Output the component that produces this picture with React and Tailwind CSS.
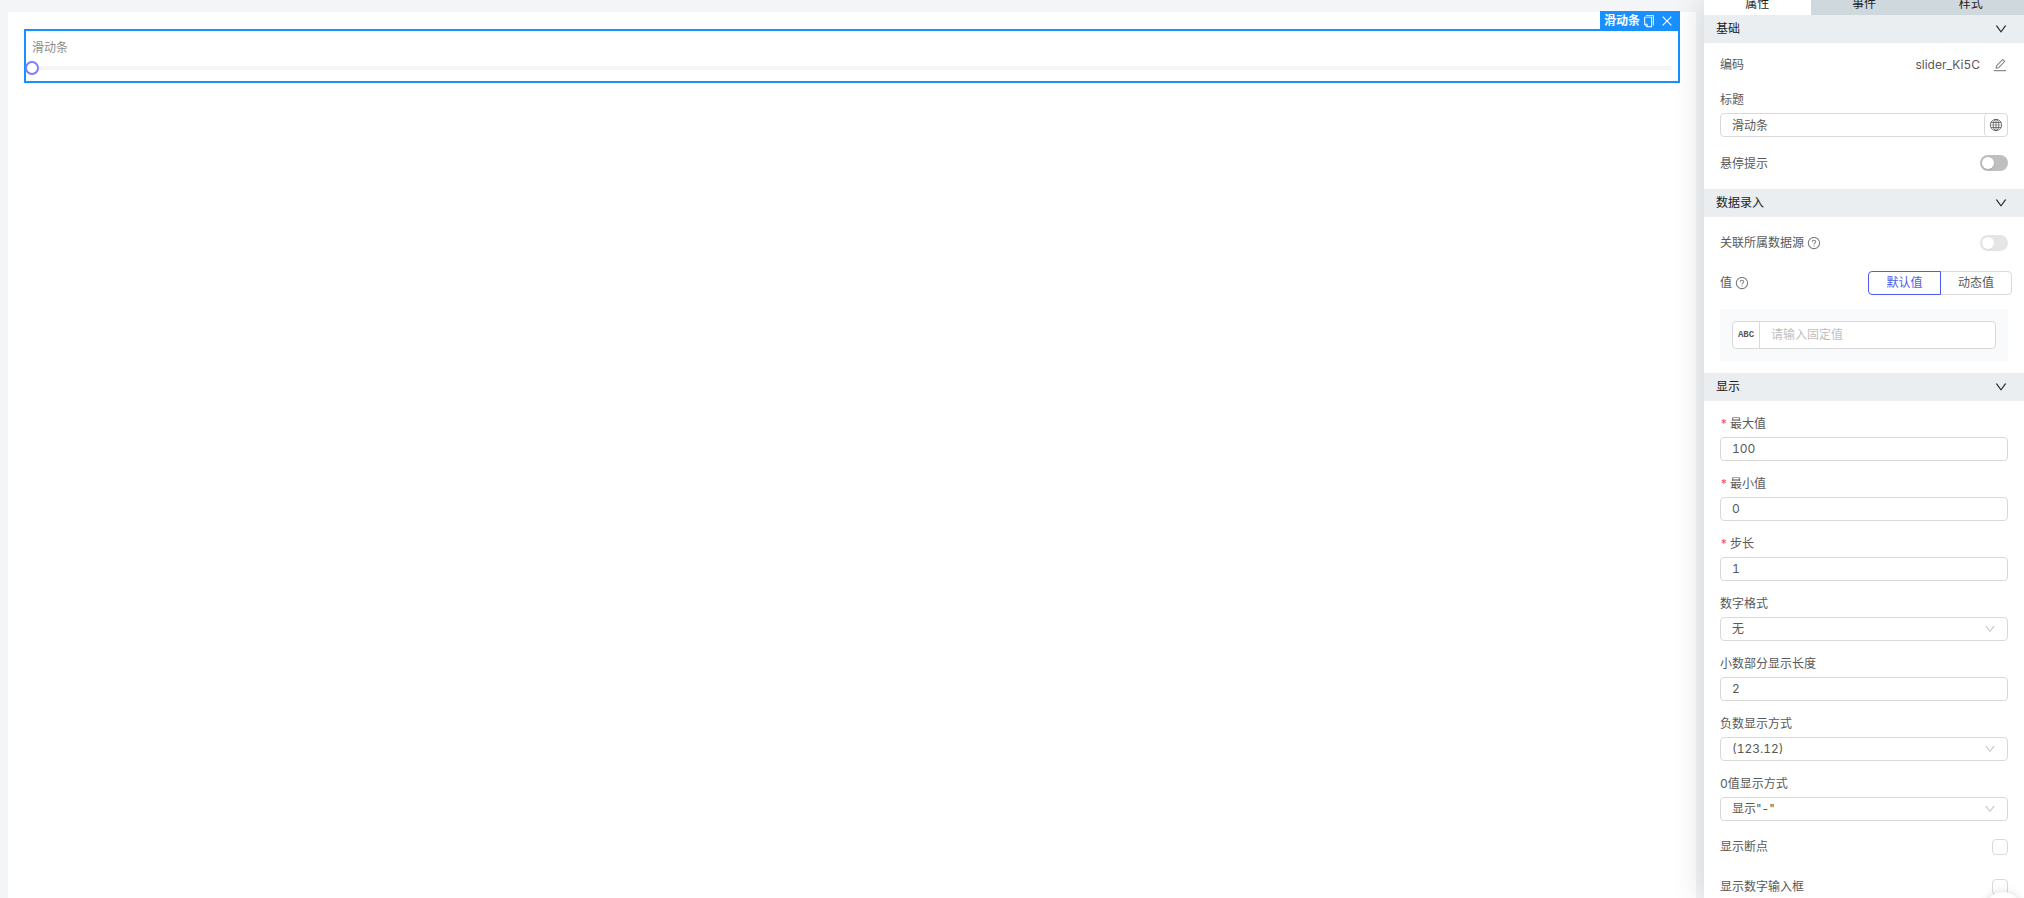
import { useState } from 'react';
import {
    AiOutlineClose,
    AiOutlineCopy,
    AiOutlineDown,
    AiOutlineEdit,
    AiOutlineQuestionCircle,
} from 'react-icons/ai';

const TABS = ['属性', '事件', '样式'];

const DISPLAY_FIELDS = [
    { id: 'max', label: '最大值', value: '100', required: true },
    { id: 'min', label: '最小值', value: '0', required: true },
    { id: 'step', label: '步长', value: '1', required: true },
    { id: 'format', label: '数字格式', value: '无', select: true },
    { id: 'decimals', label: '小数部分显示长度', value: '2' },
    { id: 'negative', label: '负数显示方式', value: '(123.12)', select: true },
    { id: 'zero', label: '0值显示方式', value: '显示"-"', select: true },
];

function GlobeIcon() {
    return (
        <svg viewBox="0 0 14 14" className="size-3.5" fill="none" stroke="currentColor" strokeWidth="0.8">
            <circle cx="7" cy="7" r="5.7" />
            <ellipse cx="7" cy="7" rx="2.8" ry="5.7" />
            <path d="M7 1.3v11.4M2 4.5h10M2 9.5h10" />
            <path d="M1.3 7h11.4" strokeWidth="0.5" />
        </svg>
    );
}

function Switch({ id, disabled }) {
    const [on, setOn] = useState(false);

    return (
        <button
            id={id}
            type="button"
            role="switch"
            aria-checked={on}
            disabled={disabled}
            onClick={() => setOn(!on)}
            className={`flex h-4 w-7 items-center rounded-full p-0.5 ${on ? 'justify-end bg-[#4d53e8]' : 'bg-[#bfbfbf]'} ${disabled ? 'opacity-40' : ''}`}
        >
            <span className="size-3 rounded-full bg-white shadow-sm" />
        </button>
    );
}

function Section({ title, children }) {
    const [open, setOpen] = useState(true);

    return (
        <section>
            <h2>
                <button
                    type="button"
                    onClick={() => setOpen(!open)}
                    className="flex h-7 w-full items-center justify-between bg-[#eaeef1] pr-4 pl-3 text-[#222]"
                >
                    {title}
                    <AiOutlineDown className="size-3.5" />
                </button>
            </h2>
            {open && children}
        </section>
    );
}

function Field({ field }) {
    const [value, setValue] = useState(field.value);
    const control = 'h-6 w-full appearance-none rounded border border-[#d9d9d9] bg-white px-[11px] pb-px outline-none focus:border-[#4d53e8]';

    return (
        <div className="mb-3 flex flex-col">
            <label htmlFor={field.id} className="mb-1 flex h-5 items-center pt-px">
                {field.required && <span className="mr-1 w-1.5 text-[#ff4d4f]">*</span>}
                {field.label}
            </label>
            {field.select ? (
                <div className="relative">
                    <select id={field.id} className={control}>
                        <option>{field.value}</option>
                    </select>
                    <AiOutlineDown className="pointer-events-none absolute top-1.5 right-3 size-3 text-[#bfbfbf]" />
                </div>
            ) : (
                <input id={field.id} value={value} onChange={(e) => setValue(e.target.value)} className={control} />
            )}
        </div>
    );
}

function CheckRow({ id, label }) {
    return (
        <div className="flex h-10 items-center justify-between">
            <label htmlFor={id}>{label}</label>
            <input id={id} type="checkbox" className="size-4 appearance-none rounded border border-[#d9d9d9] bg-white checked:bg-[#4d53e8]" />
        </div>
    );
}

// Design area with the selected slider widget
function Canvas() {
    const [value, setValue] = useState(0);

    return (
        <main className="min-w-0 flex-1 pt-3 pr-2 pl-2">
            <div className="h-full bg-white px-4 pt-[17px]">
                <div className="relative border-2 border-[#1890ff] px-1.5 pt-1.5 pb-[11px]">
                    <div className="absolute -top-5 -right-0.5 flex h-5 w-20 items-center bg-[#1890ff] pl-1 text-white">
                        <span className="font-bold">滑动条</span>
                        <button type="button" aria-label="复制" className="ml-0.5">
                            <AiOutlineCopy className="size-3.5" />
                        </button>
                        <button type="button" aria-label="删除" className="ml-1">
                            <AiOutlineClose className="size-3.5" />
                        </button>
                    </div>
                    <label htmlFor="slider" className="flex h-5 items-center pt-px text-[#8c8c8c]">滑动条</label>
                    <div className="mt-[9px] flex h-1 items-center rounded-sm bg-[#f5f5f5]">
                        <input
                            id="slider"
                            type="range"
                            value={value}
                            onChange={(e) => setValue(e.target.value)}
                            className="-mx-[7px] h-3.5 w-[calc(100%+14px)] shrink-0 appearance-none bg-transparent [&::-webkit-slider-thumb]:size-3.5 [&::-webkit-slider-thumb]:appearance-none [&::-webkit-slider-thumb]:rounded-full [&::-webkit-slider-thumb]:border-2 [&::-webkit-slider-thumb]:border-[#7b7fff] [&::-webkit-slider-thumb]:bg-white"
                        />
                    </div>
                </div>
            </div>
        </main>
    );
}

export default function App() {
    const [tab, setTab] = useState('属性');
    const [mode, setMode] = useState('default');

    return (
        <div className="relative flex h-screen overflow-hidden bg-[#f4f5f7] font-['Inter','Noto_Sans_CJK_SC',sans-serif] text-xs text-[#595959] tabular-nums">
            <Canvas />

            <aside className="relative w-80 shrink-0 overflow-visible bg-white shadow-[-4px_0_28px_rgba(0,0,0,0.12)]">
                <div className="flex h-[15px] items-end overflow-hidden">
                    {TABS.map((name) => (
                        <button
                            key={name}
                            type="button"
                            onClick={() => setTab(name)}
                            className={`h-6 flex-1 pt-px text-[#222] ${tab === name ? 'bg-white' : 'bg-[#cfd8dd]'}`}
                        >
                            {name}
                        </button>
                    ))}
                </div>

                <Section title="基础">
                    <div className="px-4 pt-3 pb-[18px]">
                        <div className="flex h-5 items-center justify-between">
                            <span>编码</span>
                            <span className="flex items-center gap-3">
                                slider_Ki5C
                                <button type="button" aria-label="编辑编码">
                                    <AiOutlineEdit className="size-4 text-[#8c8c8c]" />
                                </button>
                            </span>
                        </div>
                        <label htmlFor="title" className="mt-3.5 mb-1 flex h-5 items-center pt-px">标题</label>
                        <div className="flex h-6 rounded border border-[#d9d9d9]">
                            <input id="title" defaultValue="滑动条" className="min-w-0 flex-1 px-[11px] pt-px outline-none" />
                            <button type="button" aria-label="多语言" className="flex w-[23px] items-center justify-center rounded-l border-l border-[#d9d9d9]">
                                <GlobeIcon />
                            </button>
                        </div>
                        <div className="mt-[18px] flex h-4 items-center justify-between">
                            <label htmlFor="tooltip" className="pt-px">悬停提示</label>
                            <Switch id="tooltip" />
                        </div>
                    </div>
                </Section>

                <Section title="数据录入">
                    <div className="pt-4 pr-3 pb-3 pl-4">
                        <div className="flex h-5 items-center justify-between pr-1">
                            <label htmlFor="bind" className="flex items-center gap-[3px]">
                                关联所属数据源
                                <AiOutlineQuestionCircle className="size-3.5 text-[#7a7a7a]" />
                            </label>
                            <Switch id="bind" disabled />
                        </div>
                        <div className="mt-[18px] flex h-6 items-center justify-between">
                            <span className="flex items-center gap-[3px]">
                                值
                                <AiOutlineQuestionCircle className="size-3.5 text-[#7a7a7a]" />
                            </span>
                            <div className="flex">
                                <button
                                    type="button"
                                    onClick={() => setMode('default')}
                                    className={`h-6 w-[73px] rounded-l border ${mode === 'default' ? 'z-10 border-[#4d5bf5] text-[#4d5bf5]' : 'border-[#d9d9d9]'}`}
                                >
                                    默认值
                                </button>
                                <button
                                    type="button"
                                    onClick={() => setMode('dynamic')}
                                    className={`-ml-px h-6 w-[72px] rounded-r border ${mode === 'dynamic' ? 'border-[#4d5bf5] text-[#4d5bf5]' : 'border-[#d9d9d9]'}`}
                                >
                                    动态值
                                </button>
                            </div>
                        </div>
                        <div className="mt-3.5 mr-1 bg-[#f9fafc] p-3">
                            <div className="flex h-7 rounded border border-[#d9d9d9] bg-white">
                                <span className="flex w-[27px] items-center justify-center border-r border-[#d9d9d9] font-['Liberation_Mono',monospace] text-[9px] font-bold">ABC</span>
                                <input aria-label="固定值" placeholder="请输入固定值" className="min-w-0 flex-1 px-[11px] outline-none placeholder:text-[#bfbfbf]" />
                            </div>
                        </div>
                    </div>
                </Section>

                <Section title="显示">
                    <div className="px-4 pt-3">
                        {DISPLAY_FIELDS.map((field) => (
                            <Field key={field.id} field={field} />
                        ))}
                        <div className="-mt-1.5">
                            <CheckRow id="marks" label="显示断点" />
                            <CheckRow id="number-input" label="显示数字输入框" />
                        </div>
                    </div>
                </Section>
            </aside>

            {/* Floating help bubble, mostly below the fold */}
            <div className="absolute right-[3px] -bottom-[30px] size-9 rounded-full bg-white shadow-[0_0_10px_rgba(0,0,0,0.15)]" />
        </div>
    );
}
